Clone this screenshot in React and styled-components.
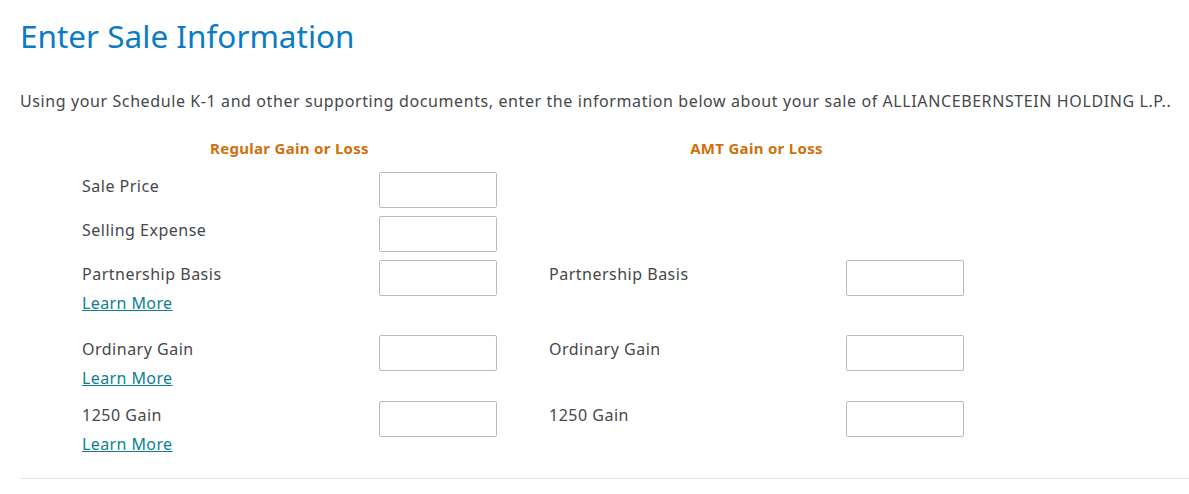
import React from "react";
import styled, { createGlobalStyle } from "styled-components";

const GlobalStyle = createGlobalStyle`
  body {
    margin: 0;
    background: #fff;
    font-family: "Noto Sans", "Open Sans", sans-serif;
    color: #45474b;
  }
`;

const Page = styled.div`
  padding: 14px 0 0 20px;
`;

const Title = styled.h1`
  margin: 0;
  font-size: 31.5px;
  font-weight: 400;
  line-height: 44px;
  color: #0a7bc4;
`;

const Intro = styled.p`
  margin: 31px 0 0 0;
  font-size: 16px;
  line-height: 24px;
  letter-spacing: 0.6px;
  color: #45474b;
`;

const Columns = styled.div`
  display: flex;
  gap: 52px;
  padding-left: 62px;
  margin-top: 24px;
`;

const Section = styled.div`
  width: 415px;
  display: flex;
  flex-direction: column;
`;

const Heading = styled.div`
  text-align: center;
  font-size: 15px;
  font-weight: 700;
  line-height: 22px;
  letter-spacing: 0.3px;
  color: #d0700a;
  margin-bottom: 13px;
`;

const Row = styled.div`
  display: flex;
  justify-content: space-between;
  align-items: flex-start;
  height: ${(p) => p.$h}px;
`;

const LabelBox = styled.div`
  display: flex;
  flex-direction: column;
`;

const Label = styled.span`
  font-size: 16px;
  line-height: 24px;
  letter-spacing: 0.5px;
  padding-top: 2px;
  color: #45474b;
`;

const Link = styled.a`
  font-size: 16px;
  line-height: 24px;
  letter-spacing: 0.4px;
  margin-top: 5px;
  color: #0d7f8f;
  text-decoration: underline;
  cursor: pointer;
`;

const Input = styled.input`
  box-sizing: border-box;
  width: 118px;
  height: 36px;
  border: 1px solid #bababa;
  border-radius: 2px;
  background: #fff;
  padding: 0 8px;
  font: inherit;
`;

const Divider = styled.hr`
  margin: 0;
  border: none;
  border-top: 1px solid #e6e6e6;
`;

const regular = [
  { label: "Sale Price", h: 44 },
  { label: "Selling Expense", h: 44 },
  { label: "Partnership Basis", link: true, h: 75 },
  { label: "Ordinary Gain", link: true, h: 66 },
  { label: "1250 Gain", link: true, h: 77 },
];

const amt = [
  { label: "", empty: true, h: 44 },
  { label: "", empty: true, h: 44 },
  { label: "Partnership Basis", h: 75 },
  { label: "Ordinary Gain", h: 66 },
  { label: "1250 Gain", h: 77 },
];

const FieldRow = ({ label, link, empty, h }) => (
  <Row $h={h}>
    <LabelBox>
      <Label>{label}</Label>
      {link && <Link>Learn More</Link>}
    </LabelBox>
    {!empty && <Input type="text" />}
  </Row>
);

export default function App() {
  return (
    <>
      <GlobalStyle />
      <Page>
        <Title>Enter Sale Information</Title>
        <Intro>
          Using your Schedule K-1 and other supporting documents, enter the information below about your sale of ALLIANCEBERNSTEIN HOLDING L.P..
        </Intro>
        <Columns>
          <Section>
            <Heading>Regular Gain or Loss</Heading>
            {regular.map((r, i) => (
              <FieldRow key={i} {...r} />
            ))}
          </Section>
          <Section>
            <Heading>AMT Gain or Loss</Heading>
            {amt.map((r, i) => (
              <FieldRow key={i} {...r} />
            ))}
          </Section>
        </Columns>
        <Divider />
      </Page>
    </>
  );
}
